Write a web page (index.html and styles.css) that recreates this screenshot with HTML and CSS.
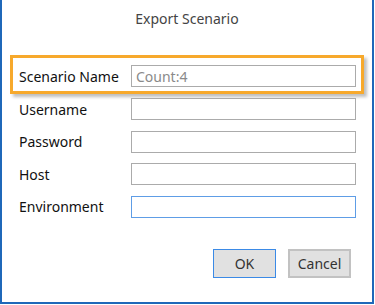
FILE: index.html
```html
<!DOCTYPE html>
<html lang="en">
<head>
    <meta charset="UTF-8">
    <meta name="viewport" content="width=device-width, initial-scale=1.0">
    <title>Export Scenario</title>
    <link rel="stylesheet" href="styles.css">
</head>
<body>
    <div class="dialog">
        <div class="dialog-title">Export Scenario</div>

        <form class="dialog-form" id="exportForm">
            <div class="form-row highlight">
                <label for="scenario">Scenario Name</label>
                <input type="text" id="scenario" class="readonly" value="Count:4" readonly>
            </div>
            <div class="form-row">
                <label for="username">Username</label>
                <input type="text" id="username">
            </div>
            <div class="form-row">
                <label for="password">Password</label>
                <input type="password" id="password">
            </div>
            <div class="form-row">
                <label for="host">Host</label>
                <input type="text" id="host">
            </div>
            <div class="form-row">
                <label for="environment">Environment</label>
                <input type="text" id="environment" class="focused">
            </div>
        </form>

        <div class="dialog-buttons">
            <button type="button" class="btn btn-default">OK</button>
            <button type="button" class="btn">Cancel</button>
        </div>
    </div>
</body>
</html>
```

FILE: styles.css
```css
body {
    margin: 0;
    background: #fff;
    font-family: "Noto Sans", "Open Sans", sans-serif;
    font-size: 14px;
}
.dialog {
    width: 374px;
    height: 304px;
    box-sizing: border-box;
    border: 2px solid #1f68b9;
    border-top: none;
    background: #fff;
    display: flex;
    flex-direction: column;
}
.dialog-title {
    text-align: center;
    color: #444;
    padding-top: 9px;
    height: 55px; /* 標題到橘框的距離 */
    box-sizing: border-box;
}
.dialog-form {
    display: flex;
    flex-direction: column;
    gap: 10.5px;
    padding: 0 15px 0 17px;
}
.form-row {
    display: flex;
    align-items: center;
}
.form-row label {
    width: 112px;
    color: #111;
}
.form-row input {
    width: 225px;
    height: 22px;
    box-sizing: border-box;
    border: 1px solid #ababab;
    padding: 0 4px;
    font: inherit;
    outline: none;
}
.form-row input.readonly {
    color: #8a8a8a;
}
.form-row input.focused {
    border-color: #5e9de6;
}
/* 橘色強調框 */
.form-row.highlight {
    margin: 0 -7px 0 -9px;
    padding: 7px 4px 4px 6px;
    border: 3px solid #f7a92c;
    box-shadow: 3px 3px 3px rgba(0, 0, 0, 0.25);
    margin-bottom: -6.5px;
}
.dialog-buttons {
    display: flex;
    justify-content: flex-end;
    gap: 12px;
    padding: 31px 21px 0 0;
}
.btn {
    width: 63px;
    height: 29px;
    box-sizing: border-box;
    background: #e1e1e1;
    border: 2px solid #c2c2c2;
    color: #333;
    font: inherit;
    padding: 0;
    cursor: pointer;
}
.btn-default {
    border: 1px solid #3b8ae6;
}
```
